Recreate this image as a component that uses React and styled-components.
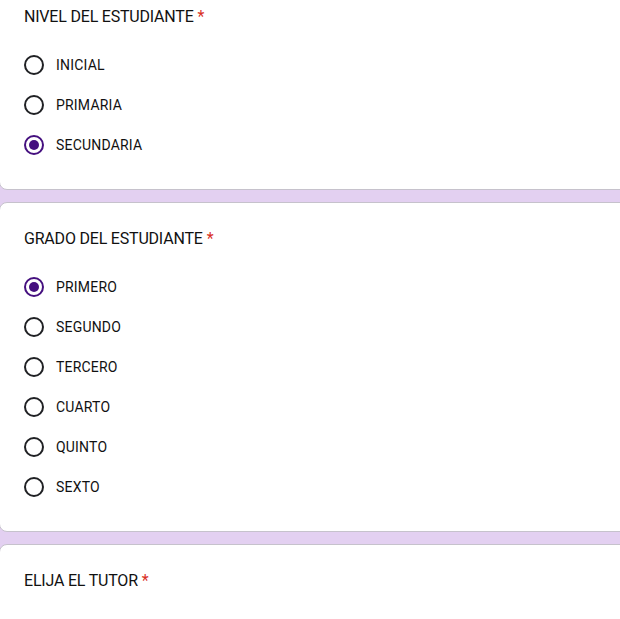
import React from "react";
import styled, { createGlobalStyle } from "styled-components";

const Global = createGlobalStyle`
  html, body { margin: 0; padding: 0; background: #e3d0f1; overflow: hidden; }
  body { font-family: Roboto, "Liberation Sans", sans-serif; }
`;

const Form = styled.div`
  width: 700px;
  margin: -20px 0 0 -1px;
  display: flex;
  flex-direction: column;
  gap: 12px;
`;

const Card = styled.section`
  background: #fff;
  border: 1px solid #c6c2cc;
  border-radius: 8px;
  padding: 24px;
  display: flex;
  flex-direction: column;
  min-height: ${(p) => (p.$tall ? "120px" : "auto")};
`;

const Title = styled.div`
  font-family: Roboto, "Liberation Sans", sans-serif;
  font-size: 16px;
  line-height: 24px;
  color: #111;
  margin-bottom: ${(p) => (p.$last ? 0 : 16)}px;
  letter-spacing: -0.2px;
`;

const Req = styled.span`
  color: #d93025;
  margin-left: 4px;
`;

const Option = styled.label`
  height: 40px;
  display: flex;
  align-items: center;
  gap: 12px;
  font-family: Roboto, "Liberation Sans", sans-serif;
  font-size: 14px;
  color: #111;
  letter-spacing: 0.2px;
`;

const Radio = styled.span`
  box-sizing: border-box;
  width: 20px;
  height: 20px;
  border-radius: 50%;
  border: 2px solid ${(p) => (p.$checked ? "#45107f" : "#202124")};
  display: flex;
  align-items: center;
  justify-content: center;
  &::after {
    content: "";
    width: 10px;
    height: 10px;
    border-radius: 50%;
    background: #45107f;
    display: ${(p) => (p.$checked ? "block" : "none")};
  }
`;

const Question = ({ title, options, selected }) => (
  <Card $tall={!options}>
    <Title $last={!options}>
      {title}
      <Req>*</Req>
    </Title>
    {options &&
      options.map((o) => (
        <Option key={o}>
          <Radio $checked={o === selected} />
          {o}
        </Option>
      ))}
  </Card>
);

export default function App() {
  return (
    <>
      <Global />
      <Form>
        <Question
          title="NIVEL DEL ESTUDIANTE"
          options={["INICIAL", "PRIMARIA", "SECUNDARIA"]}
          selected="SECUNDARIA"
        />
        <Question
          title="GRADO DEL ESTUDIANTE"
          options={["PRIMERO", "SEGUNDO", "TERCERO", "CUARTO", "QUINTO", "SEXTO"]}
          selected="PRIMERO"
        />
        <Question title="ELIJA EL TUTOR" />
      </Form>
    </>
  );
}
